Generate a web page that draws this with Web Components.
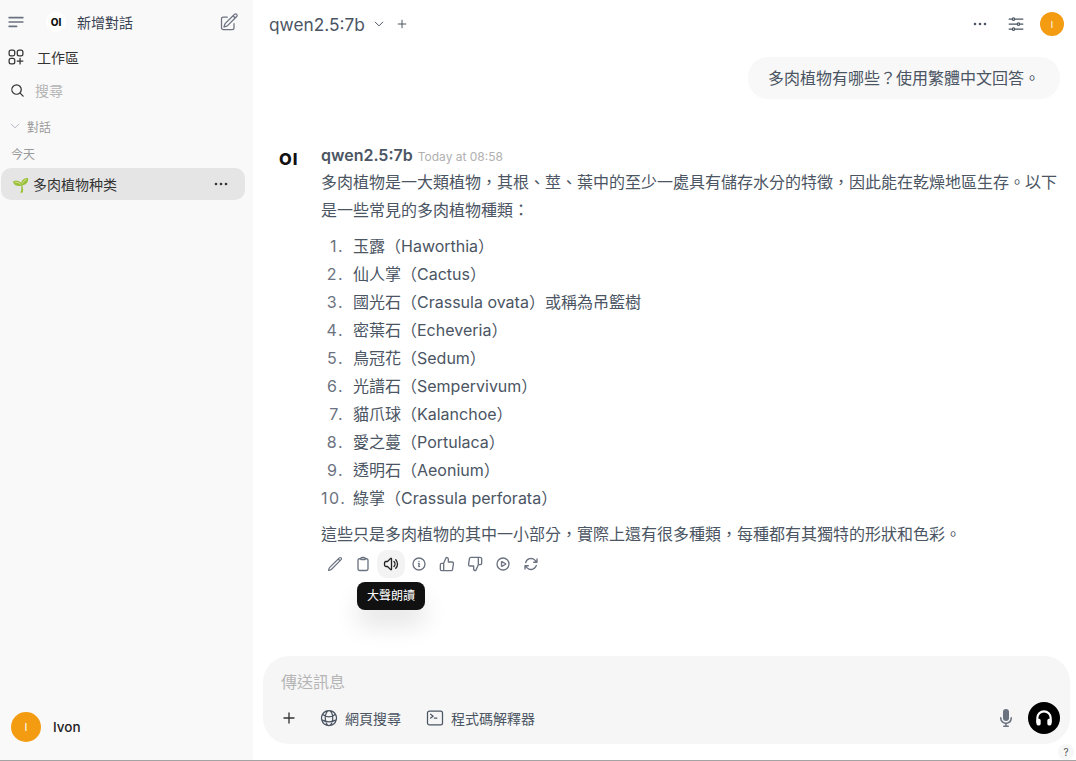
<!DOCTYPE html>
<html lang="zh-Hant">
<head>
<meta charset="utf-8">
<title>多肉植物种类</title>
<style>
  html, body { margin: 0; height: 761px; overflow: hidden; background: #fff; }
  body { display: flex; flex-direction: column; font-family: Inter, "Noto Sans CJK TC", sans-serif; color: #374151; }
  #app { flex: 1; min-height: 0; display: flex; }
  #edge { height: 1px; background: #a3a3a3; }
</style>
</head>
<body>
<div id="app">
  <app-sidebar></app-sidebar>
  <chat-main></chat-main>
</div>
<div id="edge"></div>

<script>
const ICONS = {
  menu: '<path d="M3.75 6.75h16.5M3.75 12h16.5M3.75 17.25h9"/>',
  newChat: '<path d="m16.862 4.487 1.687-1.688a1.875 1.875 0 1 1 2.652 2.652L10.582 16.07a4.5 4.5 0 0 1-1.897 1.13L6 18l.8-2.685a4.5 4.5 0 0 1 1.13-1.897l8.932-8.931Zm0 0L19.5 7.125M18 14v4.75A2.25 2.25 0 0 1 15.75 21H5.25A2.25 2.25 0 0 1 3 18.75V8.25A2.25 2.25 0 0 1 5.25 6H10"/>',
  workspace: '<path d="M13.5 16.875h3.375m0 0h3.375m-3.375 0V13.5m0 3.375v3.375M6 10.5h2.25a2.25 2.25 0 0 0 2.25-2.25V6a2.25 2.25 0 0 0-2.25-2.25H6A2.25 2.25 0 0 0 3.75 6v2.25A2.25 2.25 0 0 0 6 10.5Zm0 9.75h2.25A2.25 2.25 0 0 0 10.5 18v-2.25a2.25 2.25 0 0 0-2.25-2.25H6a2.25 2.25 0 0 0-2.25 2.25V18A2.25 2.25 0 0 0 6 20.25Zm9.75-9.75H18a2.25 2.25 0 0 0 2.25-2.25V6A2.25 2.25 0 0 0 18 3.75h-2.25A2.25 2.25 0 0 0 13.5 6v2.25a2.25 2.25 0 0 0 2.25 2.25Z"/>',
  search: '<path d="m21 21-5.197-5.197m0 0A7.5 7.5 0 1 0 5.196 5.196a7.5 7.5 0 0 0 10.607 10.607Z"/>',
  chevron: '<path d="m19.5 8.25-7.5 7.5-7.5-7.5"/>',
  plus: '<path d="M12 4.5v15m7.5-7.5h-15"/>',
  sliders: '<path d="M10.5 6h9.75M10.5 6a1.5 1.5 0 1 1-3 0m3 0a1.5 1.5 0 1 0-3 0M3.75 6H7.5m3 12h9.75m-9.75 0a1.5 1.5 0 0 1-3 0m3 0a1.5 1.5 0 0 0-3 0m-3.75 0H7.5m9-6h3.75m-3.75 0a1.5 1.5 0 0 1-3 0m3 0a1.5 1.5 0 0 0-3 0m-9.75 0h9.75"/>',
  pencil: '<path d="m16.862 4.487 1.687-1.688a1.875 1.875 0 1 1 2.652 2.652L6.832 19.82a4.5 4.5 0 0 1-1.897 1.13l-2.685.8.8-2.685a4.5 4.5 0 0 1 1.13-1.897L16.863 4.487Zm0 0L19.5 7.125"/>',
  clipboard: '<path d="M15.666 3.888A2.25 2.25 0 0 0 13.5 2.25h-3c-1.03 0-1.9.693-2.166 1.638m7.332 0c.055.194.084.4.084.612v0a.75.75 0 0 1-.75.75H9a.75.75 0 0 1-.75-.75v0c0-.212.03-.418.084-.612m7.332 0c.646.049 1.288.11 1.927.184 1.1.128 1.907 1.077 1.907 2.185V19.5a2.25 2.25 0 0 1-2.25 2.25H6.75A2.25 2.25 0 0 1 4.5 19.5V6.257c0-1.108.806-2.057 1.907-2.185a48.208 48.208 0 0 1 1.927-.184"/>',
  speaker: '<path d="M19.114 5.636a9 9 0 0 1 0 12.728M16.463 8.288a5.25 5.25 0 0 1 0 7.424M6.75 8.25l4.72-4.72a.75.75 0 0 1 1.28.53v15.88a.75.75 0 0 1-1.28.53l-4.72-4.72H4.51c-.88 0-1.704-.507-1.938-1.354A9.009 9.009 0 0 1 2.25 12c0-.83.112-1.633.322-2.396C2.806 8.756 3.63 8.25 4.51 8.25H6.75Z"/>',
  info: '<path d="m11.25 11.25.041-.02a.75.75 0 0 1 1.063.852l-.708 2.836a.75.75 0 0 0 1.063.853l.041-.021M21 12a9 9 0 1 1-18 0 9 9 0 0 1 18 0Zm-9-3.75h.008v.008H12V8.25Z"/>',
  thumbUp: '<path d="M14 9V5a3 3 0 0 0-3-3l-4 9v11h11.28a2 2 0 0 0 2-1.7l1.38-9a2 2 0 0 0-2-2.3zM7 22H4a2 2 0 0 1-2-2v-7a2 2 0 0 1 2-2h3"/>',
  thumbDown: '<path d="M10 15v4a3 3 0 0 0 3 3l4-9V2H5.72a2 2 0 0 0-2 1.7l-1.38 9a2 2 0 0 0 2 2.3zm7-13h2.67A2.31 2.31 0 0 1 22 4v7a2.31 2.31 0 0 1-2.33 2H17"/>',
  play: '<path d="M21 12a9 9 0 1 1-18 0 9 9 0 0 1 18 0Z"/><path d="M15.91 11.672a.375.375 0 0 1 0 .656l-5.603 3.113a.375.375 0 0 1-.557-.328V8.887c0-.286.307-.466.557-.327l5.603 3.112Z"/>',
  refresh: '<path d="M16.023 9.348h4.992v-.001M2.985 19.644v-4.992m0 0h4.992m-4.993 0 3.181 3.183a8.25 8.25 0 0 0 13.803-3.7M4.031 9.865a8.25 8.25 0 0 1 13.803-3.7l3.181 3.182m0-4.991v4.99"/>',
  globe: '<path d="M12 21a9.004 9.004 0 0 0 8.716-6.747M12 21a9.004 9.004 0 0 1-8.716-6.747M12 21c2.485 0 4.5-4.03 4.5-9S14.485 3 12 3m0 18c-2.485 0-4.5-4.03-4.5-9S9.515 3 12 3m0 0a8.997 8.997 0 0 1 7.843 4.582M12 3a8.997 8.997 0 0 0-7.843 4.582m15.686 0A11.953 11.953 0 0 1 12 10.5c-2.998 0-5.74-1.1-7.843-2.918m15.686 0A8.959 8.959 0 0 1 21 12c0 .778-.099 1.533-.284 2.253m0 0A17.919 17.919 0 0 1 12 16.5c-3.162 0-6.133-.815-8.716-2.247m0 0A9.015 9.015 0 0 1 3 12c0-1.605.42-3.113 1.157-4.418"/>',
  terminal: '<path d="m6.75 7.5 3 2.25-3 2.25m4.5 0h3m-9 8.25h13.5A2.25 2.25 0 0 0 21 18V6a2.25 2.25 0 0 0-2.25-2.25H5.25A2.25 2.25 0 0 0 3 6v12a2.25 2.25 0 0 0 2.25 2.25Z"/>'
};

class UiIcon extends HTMLElement {
  connectedCallback() {
    const size = this.getAttribute("size") || 20;
    const stroke = this.getAttribute("stroke") || 1.5;
    this.attachShadow({ mode: "open" }).innerHTML = `
      <style>
        :host { display: inline-flex; flex: none; width: ${size}px; height: ${size}px; }
        svg { width: 100%; height: 100%; display: block; }
      </style>
      <svg viewBox="0 0 24 24" fill="none" stroke="currentColor" stroke-width="${stroke}" stroke-linecap="round" stroke-linejoin="round">${ICONS[this.getAttribute("name")]}</svg>`;
  }
}
customElements.define("ui-icon", UiIcon);

class DotsIcon extends HTMLElement {
  connectedCallback() {
    this.attachShadow({ mode: "open" }).innerHTML = `
      <style>
        :host { display: inline-flex; flex: none; width: 14px; height: 4px; }
        svg { display: block; }
      </style>
      <svg width="14" height="4" viewBox="0 0 14 4" fill="currentColor"><circle cx="2" cy="2" r="1.3"/><circle cx="7" cy="2" r="1.3"/><circle cx="12" cy="2" r="1.3"/></svg>`;
  }
}
customElements.define("dots-icon", DotsIcon);

class UserAvatar extends HTMLElement {
  connectedCallback() {
    const size = this.getAttribute("size") || 30;
    this.attachShadow({ mode: "open" }).innerHTML = `
      <style>
        :host {
          display: flex; flex: none; width: ${size}px; height: ${size}px; border-radius: 50%;
          background: #f39c12; color: #fff; align-items: center; justify-content: center;
          font: ${Math.round(size * 0.36)}px Inter, sans-serif;
        }
      </style>I`;
  }
}
customElements.define("user-avatar", UserAvatar);

class AppSidebar extends HTMLElement {
  constructor() {
    super();
    this.attachShadow({ mode: "open" }).innerHTML = `
      <style>
        :host {
          display: flex; flex-direction: column; flex: none; width: 253px; box-sizing: border-box;
          background: #f9f9f9; color: #374151; font-size: 14px;
        }
        .top { display: flex; align-items: center; height: 24px; padding: 10px 14px 0 6px; }
        .top .menu { color: #6b7280; margin-right: 20px; }
        .logo {
          width: 20px; height: 20px; border-radius: 50%; background: #fff; color: #111;
          display: flex; align-items: center; justify-content: center;
          font: 800 10px/1 Inter, sans-serif; margin-right: 11px; flex: none;
        }
        .top .new { flex: 1; }
        .top .edit { color: #6b7280; }
        .row { display: flex; align-items: center; height: 24px; }
        .work { margin-top: 11px; padding-left: 6px; color: #333; }
        .work span { margin-left: 11px; }
        .find { margin-top: 9px; padding-left: 10px; color: #333; }
        .find span { margin-left: 10px; color: #b5b5b5; }
        .group { margin-top: 12px; padding-left: 9px; font-size: 12px; color: #9ca3af; }
        .group span { margin-left: 6px; color: #9a9a9a; }
        .today { margin-top: 3px; padding-left: 11px; font-size: 12px; color: #9a9a9a; }
        .chat {
          display: flex; align-items: center; height: 32px; margin: 3px 8px 0 1px; padding: 0 17px 0 11px;
          background: #e5e5e5; border-radius: 10px; color: #333;
        }
        .chat .name { flex: 1; }
        .chat dots-icon { color: #333; }
        .spacer { flex: 1; }
        .user { display: flex; align-items: center; padding: 0 0 18px 11px; color: #222; font-weight: 500; font-size: 13.5px; }
        .user span { margin-left: 12px; }
      </style>
      <div class="top">
        <ui-icon class="menu" name="menu" size="20" stroke="2"></ui-icon>
        <div class="logo">OI</div>
        <div class="new">新增對話</div>
        <ui-icon class="edit" name="newChat" size="20"></ui-icon>
      </div>
      <div class="row work"><ui-icon name="workspace" size="20"></ui-icon><span>工作區</span></div>
      <div class="row find"><ui-icon name="search" size="15" stroke="2"></ui-icon><span>搜尋</span></div>
      <div class="row group"><ui-icon name="chevron" size="12"></ui-icon><span>對話</span></div>
      <div class="row today">今天</div>
      <div class="chat"><span class="name">🌱 多肉植物种类</span><dots-icon></dots-icon></div>
      <div class="spacer"></div>
      <div class="user"><user-avatar size="30"></user-avatar><span>Ivon</span></div>`;
  }
}
customElements.define("app-sidebar", AppSidebar);

class ChatHeader extends HTMLElement {
  constructor() {
    super();
    this.attachShadow({ mode: "open" }).innerHTML = `
      <style>
        :host { display: flex; align-items: center; flex: none; height: 24px; padding: 12px 12px 12px 16px; color: #374151; }
        .model { font-size: 17.3px; color: #4b5563; }
        .chev { margin-left: 8px; color: #4b5563; }
        .plus { margin-left: 11px; color: #4b5563; }
        .fill { flex: 1; }
        .dots { color: #4b5563; margin-right: 19px; }
        .tune { color: #4b5563; margin-right: 14px; }
      </style>
      <span class="model"><slot></slot></span>
      <ui-icon class="chev" name="chevron" size="12" stroke="2"></ui-icon>
      <ui-icon class="plus" name="plus" size="12" stroke="2"></ui-icon>
      <span class="fill"></span>
      <dots-icon class="dots"></dots-icon>
      <ui-icon class="tune" name="sliders" size="20"></ui-icon>
      <user-avatar size="24"></user-avatar>`;
  }
}
customElements.define("chat-header", ChatHeader);

class UserBubble extends HTMLElement {
  constructor() {
    super();
    this.attachShadow({ mode: "open" }).innerHTML = `
      <style>
        :host { display: flex; justify-content: flex-end; }
        div { background: #f8f8f8; border-radius: 20px; padding: 7px 20px; font-size: 16px; line-height: 28px; color: #4b5563; height: 28px; }
      </style>
      <div><slot></slot></div>`;
  }
}
customElements.define("user-bubble", UserBubble);

class ActionButton extends HTMLElement {
  connectedCallback() {
    const tip = this.getAttribute("tip");
    this.attachShadow({ mode: "open" }).innerHTML = `
      <style>
        :host {
          position: relative; display: flex; width: 28px; height: 28px; flex: none;
          align-items: center; justify-content: center; border-radius: 10px; color: #6b7280;
        }
        :host([tip]) { background: #f3f3f3; color: #222; }
        .tip {
          position: absolute; top: 32px; left: 50%; transform: translateX(-50%);
          height: 28px; padding: 0 10px; display: flex; align-items: center; white-space: nowrap;
          background: #111; color: #fff; border-radius: 8px; font-size: 12px;
          box-shadow: 0 16px 24px rgba(0,0,0,.10);
        }
      </style>
      <ui-icon name="${this.getAttribute("icon")}" size="16" stroke="${this.getAttribute("stroke") || 2}"></ui-icon>
      ${tip ? `<div class="tip">${tip}</div>` : ""}`;
  }
}
customElements.define("action-button", ActionButton);

class AssistantMessage extends HTMLElement {
  constructor() {
    super();
    this.attachShadow({ mode: "open" }).innerHTML = `
      <style>
        :host { display: flex; font-size: 16px; line-height: 28px; color: #4b5563; }
        .logo { flex: none; width: 42px; font: 800 16.5px/20px Inter, sans-serif; letter-spacing: 1px; color: #111; padding-top: 4px; }
        .body { flex: 1; min-width: 0; }
        .who { display: flex; align-items: baseline; height: 23px; line-height: 20px; }
        .who b { font-weight: 600; font-size: 16px; color: #4b5563; }
        .who time { margin-left: 5px; font-size: 12px; color: #b0b0b0; }
        ::slotted(p) { margin: 0; }
        .actions { display: flex; margin: 2px 0 0 0; }
      </style>
      <div class="logo">OI</div>
      <div class="body">
        <div class="who"><b>qwen2.5:7b</b><time>Today at 08:58</time></div>
        <slot></slot>
        <div class="actions">
          <action-button icon="pencil" stroke="1.8"></action-button>
          <action-button icon="clipboard"></action-button>
          <action-button icon="speaker" tip="大聲朗讀"></action-button>
          <action-button icon="info"></action-button>
          <action-button icon="thumbUp"></action-button>
          <action-button icon="thumbDown"></action-button>
          <action-button icon="play"></action-button>
          <action-button icon="refresh"></action-button>
        </div>
      </div>`;
  }
}
customElements.define("assistant-message", AssistantMessage);

class AnswerList extends HTMLElement {
  connectedCallback() {
    const items = this.textContent.trim().split("\n").map(s => s.trim());
    this.attachShadow({ mode: "open" }).innerHTML = `
      <style>
        :host { display: block; margin: 8px 0; }
        .item { display: flex; height: 28px; }
        .n { width: 23px; text-align: right; margin-right: 9px; color: #6b7280; flex: none; letter-spacing: 1.5px; white-space: nowrap; }
      </style>
      ${items.map((t, i) => `<div class="item"><span class="n">${i + 1}.</span><span>${t}</span></div>`).join("")}`;
  }
}
customElements.define("answer-list", AnswerList);

class ChatInput extends HTMLElement {
  constructor() {
    super();
    this.attachShadow({ mode: "open" }).innerHTML = `
      <style>
        :host {
          display: flex; flex-direction: column; flex: none; height: 88px; box-sizing: border-box;
          margin: 0 6px 16px 10px; padding: 14px 10px 10px 18px;
          background: #f6f6f6; border-radius: 26px; font-size: 16px; color: #4b5563;
        }
        .ph { color: #b5b5b5; line-height: 24px; height: 24px; }
        .tools { display: flex; align-items: center; margin-top: 8px; height: 32px; font-size: 14px; }
        .plus { color: #333; margin-right: 22px; }
        .tool { display: flex; align-items: center; margin-right: 24px; color: #4b5563; }
        .tool span { margin-left: 6px; }
        .fill { flex: 1; }
        .mic { color: #6b7280; margin-right: 12px; }
        .call { width: 32px; height: 32px; border-radius: 50%; background: #000; display: flex; align-items: center; justify-content: center; }
        .call svg { width: 20px; height: 20px; display: block; }
      </style>
      <div class="ph">傳送訊息</div>
      <div class="tools">
        <ui-icon class="plus" name="plus" size="16" stroke="2"></ui-icon>
        <div class="tool"><ui-icon name="globe" size="20"></ui-icon><span>網頁搜尋</span></div>
        <div class="tool"><ui-icon name="terminal" size="20"></ui-icon><span>程式碼解釋器</span></div>
        <span class="fill"></span>
        <svg class="mic" width="20" height="20" viewBox="0 0 20 20" fill="currentColor"><path d="M7 4a3 3 0 0 1 6 0v6a3 3 0 1 1-6 0V4Z"/><path d="M5.5 9.643a.75.75 0 0 0-1.5 0V10c0 3.06 2.29 5.585 5.25 5.954V17.5h-1.5a.75.75 0 0 0 0 1.5h4.5a.75.75 0 0 0 0-1.5h-1.5v-1.546A6.001 6.001 0 0 0 16 10v-.357a.75.75 0 0 0-1.5 0V10a4.5 4.5 0 0 1-9 0v-.357Z"/></svg>
        <div class="call"><svg viewBox="0 0 24 24" fill="none" stroke="#fff" stroke-width="2.6" stroke-linecap="round"><path d="M4 17v-5a8 8 0 0 1 16 0v5"/><rect x="3" y="13" width="5" height="8" rx="2" fill="#fff" stroke="none"/><rect x="16" y="13" width="5" height="8" rx="2" fill="#fff" stroke="none"/></svg></div>
      </div>`;
  }
}
customElements.define("chat-input", ChatInput);

class ChatMain extends HTMLElement {
  constructor() {
    super();
    this.attachShadow({ mode: "open" }).innerHTML = `
      <style>
        :host { position: relative; flex: 1; min-width: 0; display: flex; flex-direction: column; background: #fff; }
        .scroll { flex: 1; min-height: 0; padding: 9px 16px 0 26px; }
        assistant-message { margin-top: 46px; }
        p { margin: 0; }
        .help {
          position: absolute; right: 2px; bottom: 0; width: 16px; height: 16px; border-radius: 50%;
          background: #f7f7f7; color: #555; font: 10px/16px Inter, sans-serif; text-align: center;
        }
      </style>
      <chat-header>qwen2.5:7b</chat-header>
      <div class="scroll">
        <user-bubble>多肉植物有哪些？使用繁體中文回答。</user-bubble>
        <assistant-message>
          <p>多肉植物是一大類植物，其根、莖、葉中的至少一處具有儲存水分的特徵，因此能在乾燥地區生存。以下是一些常見的多肉植物種類：</p>
          <answer-list>
            玉露（Haworthia）
            仙人掌（Cactus）
            國光石（Crassula ovata）或稱為吊籃樹
            密葉石（Echeveria）
            鳥冠花（Sedum）
            光譜石（Sempervivum）
            貓爪球（Kalanchoe）
            愛之蔓（Portulaca）
            透明石（Aeonium）
            綠掌（Crassula perforata）
          </answer-list>
          <p>這些只是多肉植物的其中一小部分，實際上還有很多種類，每種都有其獨特的形狀和色彩。</p>
        </assistant-message>
      </div>
      <chat-input></chat-input>
      <div class="help">?</div>`;
  }
}
customElements.define("chat-main", ChatMain);
</script>
</body>
</html>
